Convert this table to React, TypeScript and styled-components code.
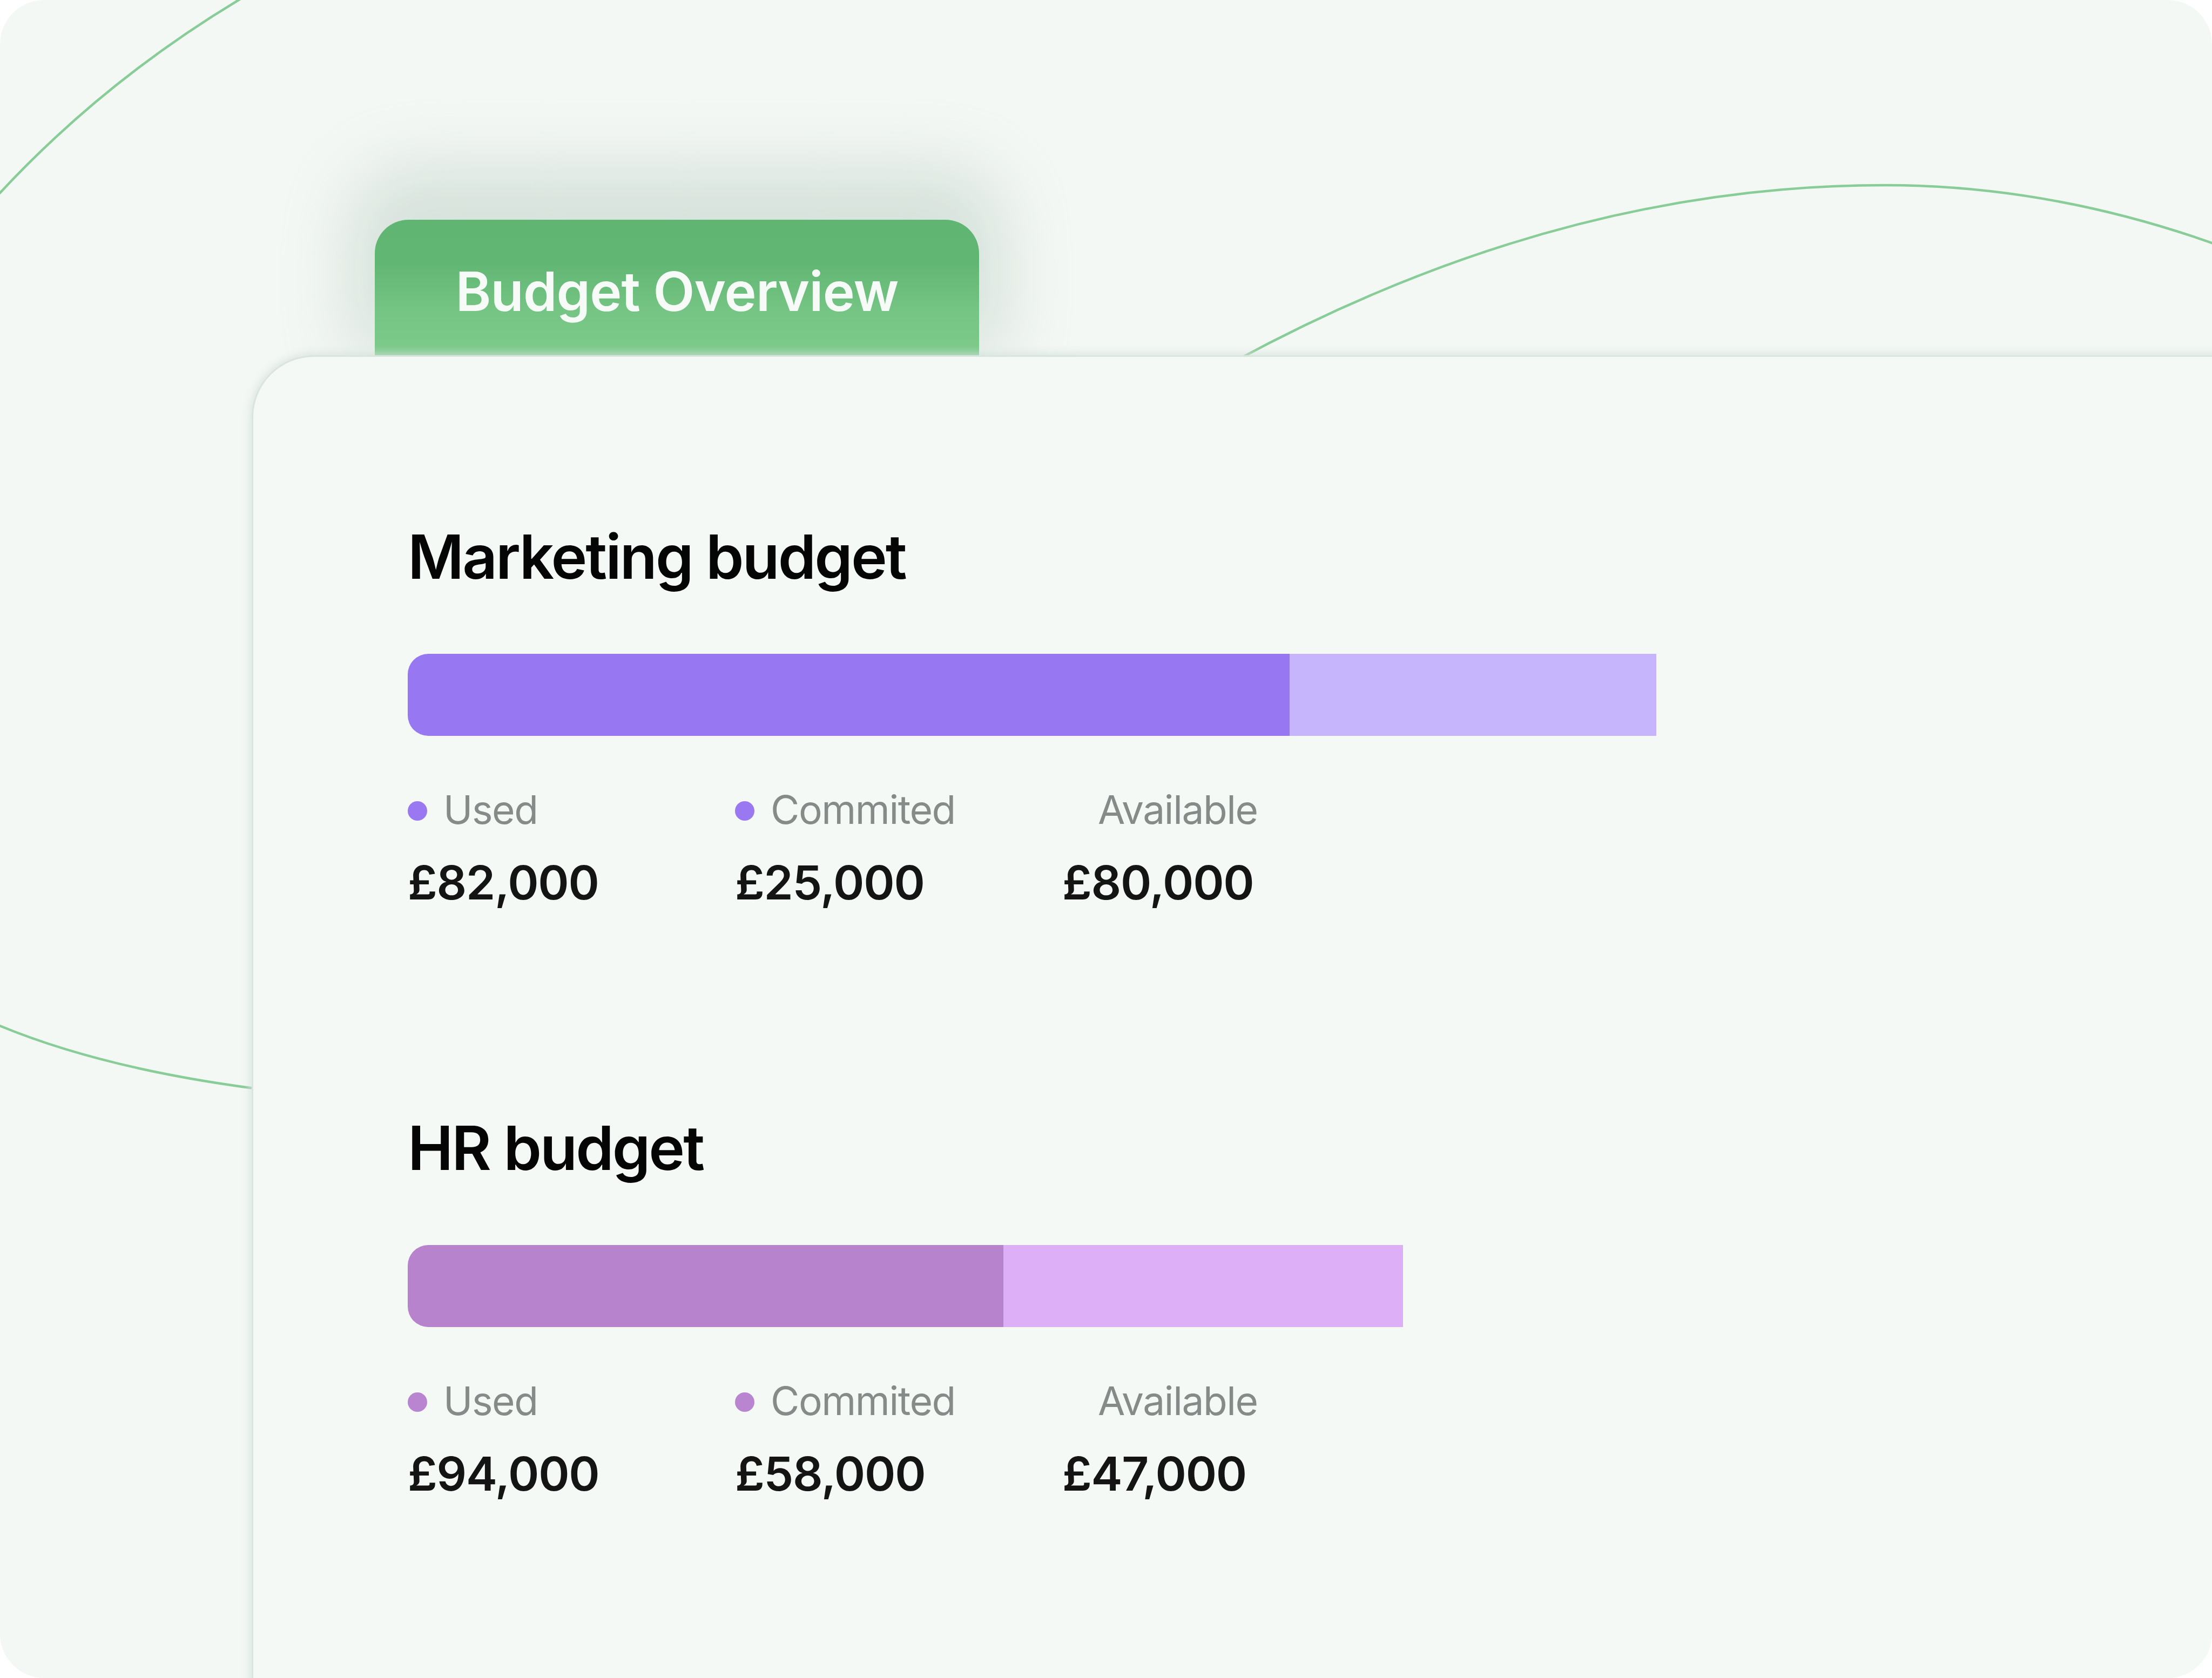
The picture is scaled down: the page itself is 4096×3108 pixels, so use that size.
import React from "react";
import styled, { createGlobalStyle } from "styled-components";

const GlobalStyle = createGlobalStyle`
  html, body {
    margin: 0;
    padding: 0;
    background: #ffffff;
  }
  body {
    font-family: Inter, "Noto Sans", "Liberation Sans", sans-serif;
    -webkit-font-smoothing: antialiased;
  }
`;

const Frame = styled.div`
  position: relative;
  box-sizing: border-box;
  width: 4096px;
  height: 3108px;
  border-radius: 82px;
  overflow: hidden;
  background: #f4f8f5;
  display: flex;
  flex-direction: column;
  padding: 407px 0 0 469px;
`;

const Decor = styled.svg`
  position: absolute;
  inset: 0;
  width: 100%;
  height: 100%;
  pointer-events: none;
  z-index: 0;
`;

const Tab = styled.div`
  position: relative;
  z-index: 1;
  box-sizing: border-box;
  margin-left: 225px;
  width: 1119px;
  height: 254px;
  flex: none;
  border-radius: 62px 62px 0 0;
  background: linear-gradient(
    180deg,
    #60b572 0%,
    #62b673 32%,
    #76c585 68%,
    #7ecb8c 100%
  );
  box-shadow: 0 -50px 130px 45px rgba(175, 198, 184, 0.45);
  display: flex;
  align-items: center;
  justify-content: center;
  padding-top: 10px;
  color: #f7fbf8;
  font-size: 100px;
  font-weight: 600;
  letter-spacing: -0.8px;
`;

const Card = styled.div`
  position: relative;
  z-index: 2;
  flex: 1;
  margin-right: -300px;
  margin-bottom: -300px;
  background: #f5f9f6;
  border-radius: 112px 0 0 0;
  box-shadow: 0 0 0 3px rgba(218, 229, 222, 0.95),
    0 0 16px 6px rgba(214, 226, 218, 0.85);
  padding: 314px 0 0 286px;
  display: flex;
  flex-direction: column;
  gap: 392px;
`;

const Section = styled.section`
  display: flex;
  flex-direction: column;
`;

const Title = styled.h2`
  margin: 0;
  font-size: 113px;
  line-height: 1;
  font-weight: 600;
  color: #050505;
  letter-spacing: -3px;
`;

const Bar = styled.div<{ $width: number }>`
  margin-top: 123px;
  display: flex;
  width: ${(p) => p.$width}px;
  height: 152px;
  border-radius: 38px 0 0 38px;
  overflow: hidden;
`;

const Segment = styled.div<{ $color: string; $grow: number }>`
  flex: ${(p) => p.$grow} 0 0;
  background: ${(p) => p.$color};
`;

const Stats = styled.div`
  margin-top: 100px;
  display: grid;
  grid-template-columns: repeat(3, 606px);
`;

const Stat = styled.div`
  display: flex;
  flex-direction: column;
  gap: 55px;
`;

const Label = styled.div`
  display: flex;
  align-items: center;
  gap: 30px;
  font-size: 73px;
  line-height: 1;
  font-weight: 400;
  color: #858b88;
  letter-spacing: -1.4px;
`;

const Dot = styled.span<{ $color: string }>`
  width: 36px;
  height: 36px;
  border-radius: 50%;
  flex: none;
  background: ${(p) => p.$color};
  margin-top: 4px;
`;

const Value = styled.div`
  font-size: 87px;
  line-height: 1;
  font-weight: 600;
  color: #141414;
  letter-spacing: -1.2px;
`;

type Budget = {
  title: string;
  width: number;
  usedWidth: number;
  usedColor: string;
  restColor: string;
  dot: string;
  values: [string, string, string];
};

const budgets: Budget[] = [
  {
    title: "Marketing budget",
    width: 2312,
    usedWidth: 1633,
    usedColor: "#9777f2",
    restColor: "#c6b5fd",
    dot: "#9a78f1",
    values: ["£82,000", "£25,000", "£80,000"],
  },
  {
    title: "HR budget",
    width: 1843,
    usedWidth: 1103,
    usedColor: "#b783cd",
    restColor: "#ddaff6",
    dot: "#b985d0",
    values: ["£94,000", "£58,000", "£47,000"],
  },
];

const labels = ["Used", "Commited", "Available"];

function BudgetBlock({ b }: { b: Budget }) {
  return (
    <Section>
      <Title>{b.title}</Title>
      <Bar $width={b.width}>
        <Segment $color={b.usedColor} $grow={b.usedWidth} />
        <Segment $color={b.restColor} $grow={b.width - b.usedWidth} />
      </Bar>
      <Stats>
        {labels.map((l, i) => (
          <Stat key={l}>
            <Label>
              <Dot $color={i < 2 ? b.dot : "transparent"} />
              {l}
            </Label>
            <Value>{b.values[i]}</Value>
          </Stat>
        ))}
      </Stats>
    </Section>
  );
}

export default function App() {
  return (
    <>
      <GlobalStyle />
      <Frame>
        <Decor viewBox="0 0 4096 3108" preserveAspectRatio="none">
          <g fill="none" stroke="#88cc97" strokeWidth="4.5" strokeLinecap="round">
            <path d="M -10 368 Q 190 150 452 -6" />
            <path d="M -10 1896 Q 200 1985 520 2022" />
            <path d="M 2250 689 Q 2870 343 3490 343 Q 3820 343 4150 470" />
          </g>
        </Decor>
        <Tab>Budget Overview</Tab>
        <Card>
          {budgets.map((b) => (
            <BudgetBlock key={b.title} b={b} />
          ))}
        </Card>
      </Frame>
    </>
  );
}
